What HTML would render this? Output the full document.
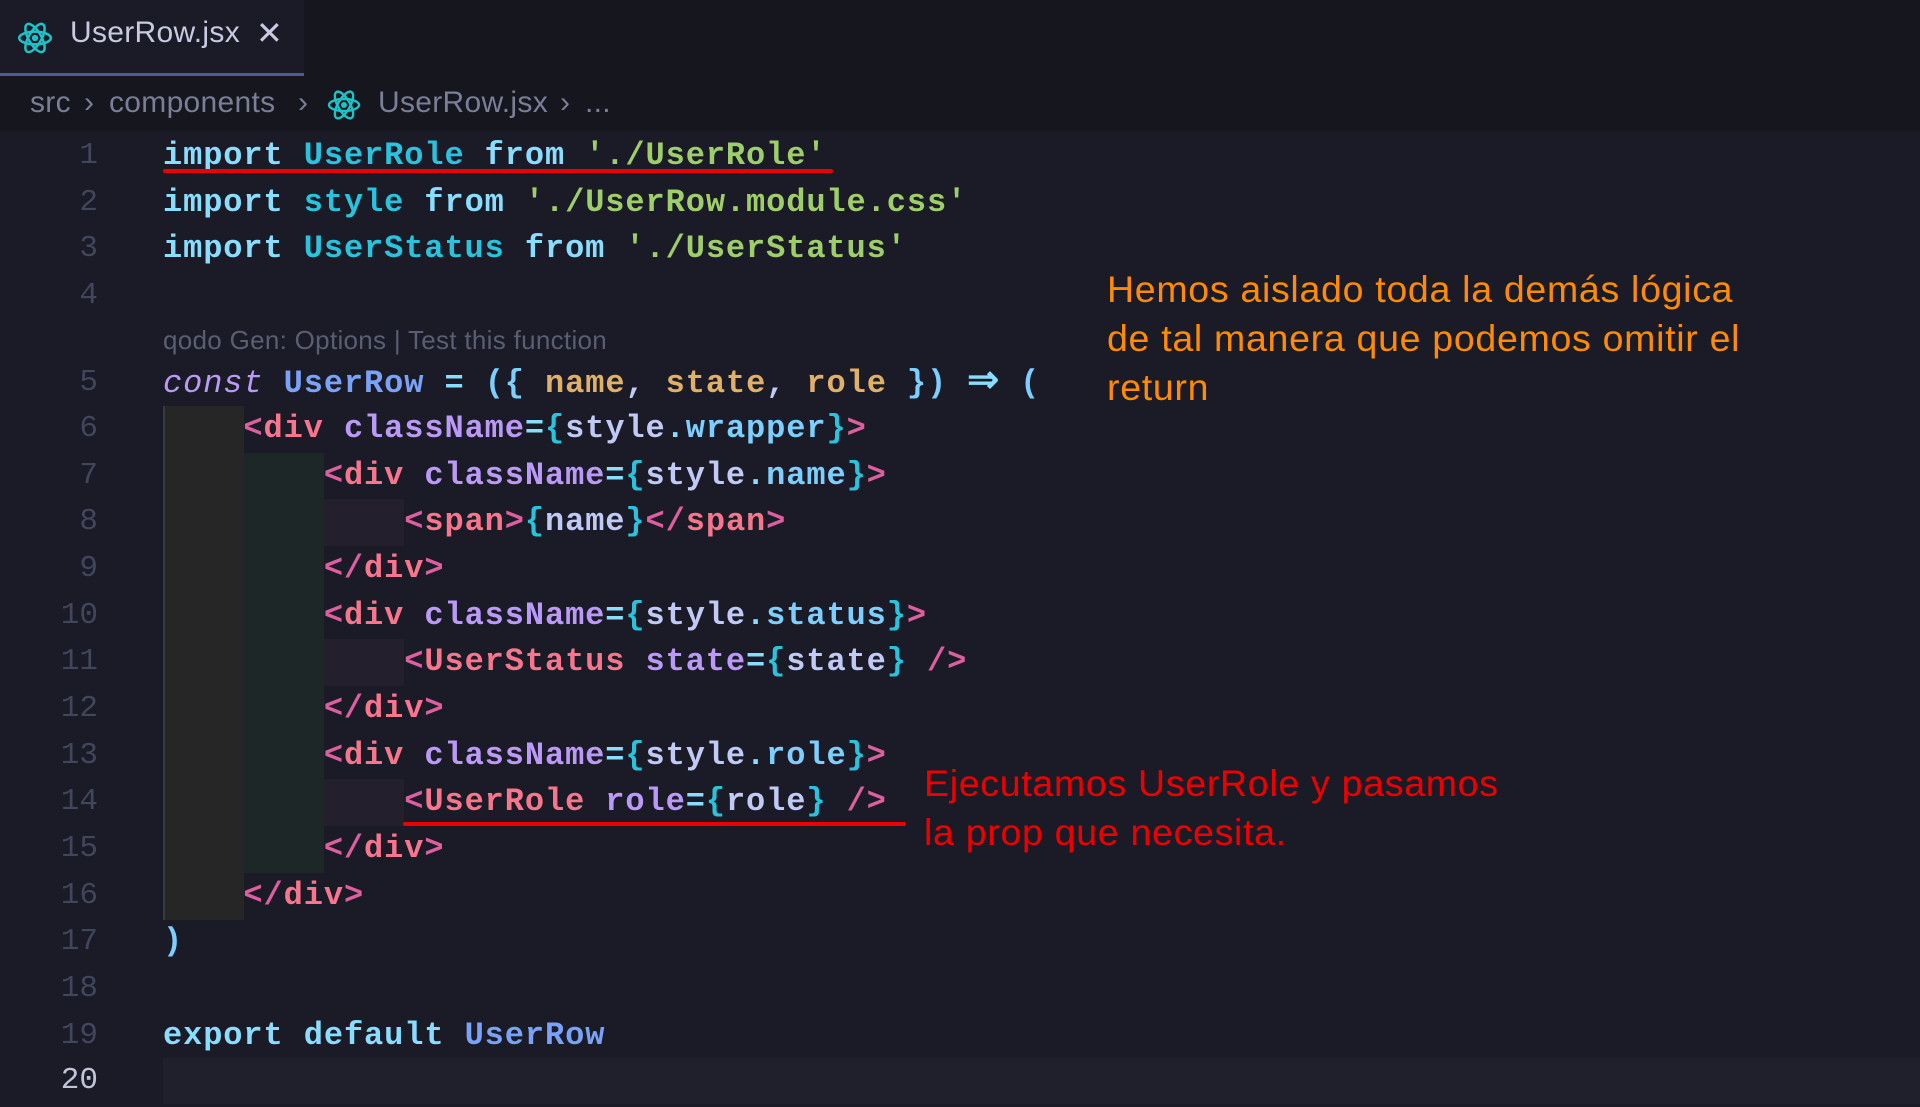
<!DOCTYPE html>
<html><head><meta charset="utf-8"><style>
*{margin:0;padding:0;box-sizing:border-box}
body{width:1920px;height:1104px;background:#1a1b26;overflow:hidden;position:relative;font-family:"Liberation Mono",monospace}
.tabbar{position:absolute;left:0;top:0;width:1920px;height:76px;background:#16161e}
.tab{position:absolute;left:0;top:0;width:304px;height:76px;background:#1a1b26;border-bottom:3px solid #4a5a9a}
.tab span{position:absolute;left:70px;top:16px;font:30px "Liberation Sans",sans-serif;color:#c8cbe0;letter-spacing:0.3px}
.tab .x{left:256px;top:14px;font-size:32px;color:#c8cbe0}
.bc{position:absolute;left:0;top:76px;width:1920px;height:55px;background:#16161e;font:30px "Liberation Sans",sans-serif;color:#7a7e96;letter-spacing:0.3px}
.bc span{position:absolute;top:10px}
.wrap{position:absolute;left:0;top:3px;width:1920px;height:1104px}
.ln{position:absolute;left:0;width:98px;text-align:right;color:#41465c;font-size:31px;height:46px;line-height:46px}
.code{position:absolute;left:163px;font-size:32px;letter-spacing:0.9px;white-space:pre;height:46px;line-height:46px;font-weight:bold}
.k{color:#89ddff}.t{color:#2ac3de}.s{color:#9ece6a}.c{color:#bb9af7;font-style:italic;font-weight:normal}.b{color:#7aa2f7}.o{color:#e0af68}
.p{color:#de5fa0}.tag{color:#f7768e}.a{color:#bb9af7}.w{color:#c0caf5}.br{color:#2ac3de}.pr{color:#7dcfff}
.blk{position:absolute}
.note{position:absolute;font:37.5px "Liberation Sans",sans-serif;letter-spacing:0.7px;line-height:49px}
</style></head><body>
<div class="tabbar"></div>
<div class="tab">
<svg style="position:absolute;left:16px;top:20px" width="38" height="36" viewBox="-12 -11 24 22"><g fill="none" stroke="#1ec3c8" stroke-width="1.6"><ellipse rx="10" ry="4"/><ellipse rx="10" ry="4" transform="rotate(60)"/><ellipse rx="10" ry="4" transform="rotate(120)"/></g><circle r="2" fill="#1ec3c8"/></svg>
<span>UserRow.jsx</span><span class="x">✕</span></div>
<div class="bc"><span style="left:30px">src</span><span style="left:84px">›</span><span style="left:109px">components</span><span style="left:298px">›</span>
<svg style="position:absolute;left:326px;top:12px" width="36" height="34" viewBox="-12 -11 24 22"><g fill="none" stroke="#1ec3c8" stroke-width="1.6"><ellipse rx="10" ry="4"/><ellipse rx="10" ry="4" transform="rotate(60)"/><ellipse rx="10" ry="4" transform="rotate(120)"/></g><circle r="2" fill="#1ec3c8"/></svg>
<span style="left:378px">UserRow.jsx</span><span style="left:560px">›</span><span style="left:585px">...</span></div>

<div class="blk" style="left:163px;top:1058px;width:1757px;height:46px;background:#1f202c"></div>
<div class="wrap">
<div class="blk" style="left:163px;top:403px;width:81px;height:514px;background:#262626;border-left:2px solid #3a3a3a"></div>
<div class="blk" style="left:244px;top:450px;width:80px;height:420px;background:#1d2727"></div>
<div class="blk" style="left:324px;top:496px;width:80px;height:47px;background:#231f2c"></div>
<div class="blk" style="left:324px;top:636px;width:80px;height:47px;background:#231f2c"></div>
<div class="blk" style="left:324px;top:776px;width:80px;height:47px;background:#231f2c"></div>

<div class="ln" style="top:130px">1</div><div class="code" style="top:130px"><span class="k">import</span> <span class="t">UserRole</span> <span class="k">from</span> <span class="s">'./UserRole'</span></div>
<div class="ln" style="top:177px">2</div><div class="code" style="top:177px"><span class="k">import</span> <span class="t">style</span> <span class="k">from</span> <span class="s">'./UserRow.module.css'</span></div>
<div class="ln" style="top:223px">3</div><div class="code" style="top:223px"><span class="k">import</span> <span class="t">UserStatus</span> <span class="k">from</span> <span class="s">'./UserStatus'</span></div>
<div class="ln" style="top:270px">4</div>
<div style="position:absolute;left:163px;top:322px;font:26px 'Liberation Sans',sans-serif;color:#5a5e72;letter-spacing:0.3px">qodo Gen: Options | Test this function</div>
<div class="ln" style="top:357px">5</div><div class="code" style="top:357px"><span class="c">const</span> <span class="b">UserRow</span> <span class="k">=</span> <span class="pr">({</span> <span class="o">name</span><span class="w">,</span> <span class="o">state</span><span class="w">,</span> <span class="o">role</span> <span class="pr">})</span> <span class="k" style="font-size:38px">⇒</span> <span class="pr">(</span></div>
<div class="ln" style="top:403px">6</div><div class="code" style="top:403px">    <span class="p">&lt;</span><span class="tag">div</span> <span class="a">className</span><span class="k">=</span><span class="br">{</span><span class="w">style</span><span class="k">.</span><span class="pr">wrapper</span><span class="br">}</span><span class="p">&gt;</span></div>
<div class="ln" style="top:450px">7</div><div class="code" style="top:450px">        <span class="p">&lt;</span><span class="tag">div</span> <span class="a">className</span><span class="k">=</span><span class="br">{</span><span class="w">style</span><span class="k">.</span><span class="pr">name</span><span class="br">}</span><span class="p">&gt;</span></div>
<div class="ln" style="top:496px">8</div><div class="code" style="top:496px">            <span class="p">&lt;</span><span class="tag">span</span><span class="p">&gt;</span><span class="br">{</span><span class="w">name</span><span class="br">}</span><span class="p">&lt;/</span><span class="tag">span</span><span class="p">&gt;</span></div>
<div class="ln" style="top:543px">9</div><div class="code" style="top:543px">        <span class="p">&lt;/</span><span class="tag">div</span><span class="p">&gt;</span></div>
<div class="ln" style="top:590px">10</div><div class="code" style="top:590px">        <span class="p">&lt;</span><span class="tag">div</span> <span class="a">className</span><span class="k">=</span><span class="br">{</span><span class="w">style</span><span class="k">.</span><span class="pr">status</span><span class="br">}</span><span class="p">&gt;</span></div>
<div class="ln" style="top:636px">11</div><div class="code" style="top:636px">            <span class="p">&lt;</span><span class="tag">UserStatus</span> <span class="a">state</span><span class="k">=</span><span class="br">{</span><span class="w">state</span><span class="br">}</span> <span class="p">/&gt;</span></div>
<div class="ln" style="top:683px">12</div><div class="code" style="top:683px">        <span class="p">&lt;/</span><span class="tag">div</span><span class="p">&gt;</span></div>
<div class="ln" style="top:730px">13</div><div class="code" style="top:730px">        <span class="p">&lt;</span><span class="tag">div</span> <span class="a">className</span><span class="k">=</span><span class="br">{</span><span class="w">style</span><span class="k">.</span><span class="pr">role</span><span class="br">}</span><span class="p">&gt;</span></div>
<div class="ln" style="top:776px">14</div><div class="code" style="top:776px">            <span class="p">&lt;</span><span class="tag">UserRole</span> <span class="a">role</span><span class="k">=</span><span class="br">{</span><span class="w">role</span><span class="br">}</span> <span class="p">/&gt;</span></div>
<div class="ln" style="top:823px">15</div><div class="code" style="top:823px">        <span class="p">&lt;/</span><span class="tag">div</span><span class="p">&gt;</span></div>
<div class="ln" style="top:870px">16</div><div class="code" style="top:870px">    <span class="p">&lt;/</span><span class="tag">div</span><span class="p">&gt;</span></div>
<div class="ln" style="top:916px">17</div><div class="code" style="top:916px"><span class="pr">)</span></div>
<div class="ln" style="top:963px">18</div>
<div class="ln" style="top:1010px">19</div><div class="code" style="top:1010px"><span class="k">export</span> <span class="k">default</span> <span class="b">UserRow</span></div>
<div class="ln" style="top:1055px;color:#c0c4d8">20</div>

<div class="blk" style="left:163px;top:166px;width:670px;height:4px;background:#e00;border-radius:2px"></div>
<div class="blk" style="left:403px;top:819px;width:503px;height:4px;background:#e00;border-radius:2px"></div>
</div>

<div class="note" style="left:1107px;top:265px;color:#ff8c00">Hemos aislado toda la demás lógica<br>de tal manera que podemos omitir el<br>return</div>
<div class="note" style="left:924px;top:759px;color:#ee0000">Ejecutamos UserRole y pasamos<br>la prop que necesita.</div>
</body></html>
